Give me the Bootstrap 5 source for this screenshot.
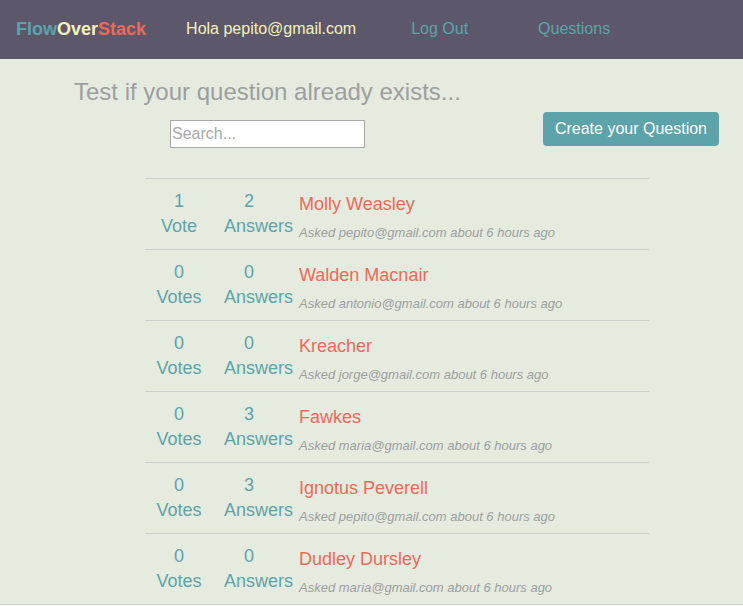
<!DOCTYPE html>
<html lang="en">
<head>
<meta charset="utf-8">
<meta name="viewport" content="width=device-width, initial-scale=1">
<title>FlowOverStack</title>
<link href="https://cdn.jsdelivr.net/npm/bootstrap@5.3.0/dist/css/bootstrap.min.css" rel="stylesheet">
<style>
:root { --teal: #5ca4a9; --cream: #f4f1bb; --coral: #ed6a5a; --plum: #5d576b; --sage: #e6ebe0; --muted: #9b9f9f; --rule: #cfcfcf; }
body { font-family: "Liberation Sans", Arial, sans-serif; font-size: 16px; background: #f4f4f4; }
a { text-decoration: none; }
.site-nav { background: var(--plum); height: 59px; padding: 0 16px 2px; }
.brand { font-size: 18px; font-weight: 700; margin-right: 40px; }
.brand, .site-nav a { line-height: 24px; }
.teal { color: var(--teal); }
.cream { color: var(--cream); }
.coral { color: var(--coral); }
.greeting { margin-right: 55px; }
.logout { margin-right: 70px; }
.page { background: var(--sage); border-bottom: 1px solid var(--rule); }
.top-area { padding: 19px 24px 0 74px; margin-bottom: 30px; }
.search-title { font-size: 24px; line-height: 28px; color: var(--muted); margin-bottom: 14px; }
.search-box { width: 195px; height: 28px; padding: 0 1px; border: 1px solid #a9a9a9; background: #fff; margin-left: 96px; }
.search-box::placeholder { color: #a9a9a9; opacity: 1; }
.btn-create { --bs-btn-bg: var(--teal); --bs-btn-color: #fff; --bs-btn-hover-bg: #4b9096; --bs-btn-hover-color: #fff; --bs-btn-padding-y: 4px; --bs-btn-padding-x: 12px; --bs-btn-border-width: 0; --bs-btn-border-radius: 4px; height: 34px; margin-top: 34px; }
.questions { padding: 0 94px 0 145px; }
.question { border-top: 1px solid var(--rule); height: 71px; color: var(--teal); font-size: 18px; line-height: 25px; }
.votes { width: 68px; padding-top: 10px; }
.answers { width: 50px; margin: 0 25px 0 11px; padding-top: 10px; }
.summary { padding-top: 13px; }
.asked { font-size: 13px; line-height: 18px; margin-top: 7px; font-style: italic; color: var(--muted); }
</style>
</head>
<body>
<nav class="site-nav d-flex align-items-center text-nowrap">
  <a class="brand" href="#"><span class="teal">Flow</span><span class="cream">Over</span><span class="coral">Stack</span></a>
  <a class="greeting cream" href="#">Hola pepito@gmail.com</a>
  <a class="logout teal" href="#">Log Out</a>
  <a class="teal" href="#">Questions</a>
</nav>
<main class="page">
  <div class="top-area d-flex justify-content-between align-items-start">
    <div>
      <label class="search-title d-block" for="search">Test if your question already exists...</label>
      <input class="search-box d-block rounded-0" id="search" type="text" placeholder="Search...">
    </div>
    <button class="btn btn-create text-nowrap" type="button">Create your Question</button>
  </div>
  <ul class="questions list-unstyled mb-0">
    <li class="question d-flex">
      <div class="votes text-center">1<br>Vote</div>
      <div class="answers text-center">2<br>Answers</div>
      <div class="summary"><a class="coral d-block" href="#">Molly Weasley</a><div class="asked">Asked pepito@gmail.com about 6 hours ago</div></div>
    </li>
    <li class="question d-flex">
      <div class="votes text-center">0<br>Votes</div>
      <div class="answers text-center">0<br>Answers</div>
      <div class="summary"><a class="coral d-block" href="#">Walden Macnair</a><div class="asked">Asked antonio@gmail.com about 6 hours ago</div></div>
    </li>
    <li class="question d-flex">
      <div class="votes text-center">0<br>Votes</div>
      <div class="answers text-center">0<br>Answers</div>
      <div class="summary"><a class="coral d-block" href="#">Kreacher</a><div class="asked">Asked jorge@gmail.com about 6 hours ago</div></div>
    </li>
    <li class="question d-flex">
      <div class="votes text-center">0<br>Votes</div>
      <div class="answers text-center">3<br>Answers</div>
      <div class="summary"><a class="coral d-block" href="#">Fawkes</a><div class="asked">Asked maria@gmail.com about 6 hours ago</div></div>
    </li>
    <li class="question d-flex">
      <div class="votes text-center">0<br>Votes</div>
      <div class="answers text-center">3<br>Answers</div>
      <div class="summary"><a class="coral d-block" href="#">Ignotus Peverell</a><div class="asked">Asked pepito@gmail.com about 6 hours ago</div></div>
    </li>
    <li class="question d-flex">
      <div class="votes text-center">0<br>Votes</div>
      <div class="answers text-center">0<br>Answers</div>
      <div class="summary"><a class="coral d-block" href="#">Dudley Dursley</a><div class="asked">Asked maria@gmail.com about 6 hours ago</div></div>
    </li>
  </ul>
</main>
<script src="https://cdn.jsdelivr.net/npm/bootstrap@5.3.0/dist/js/bootstrap.bundle.min.js"></script>
</body>
</html>
